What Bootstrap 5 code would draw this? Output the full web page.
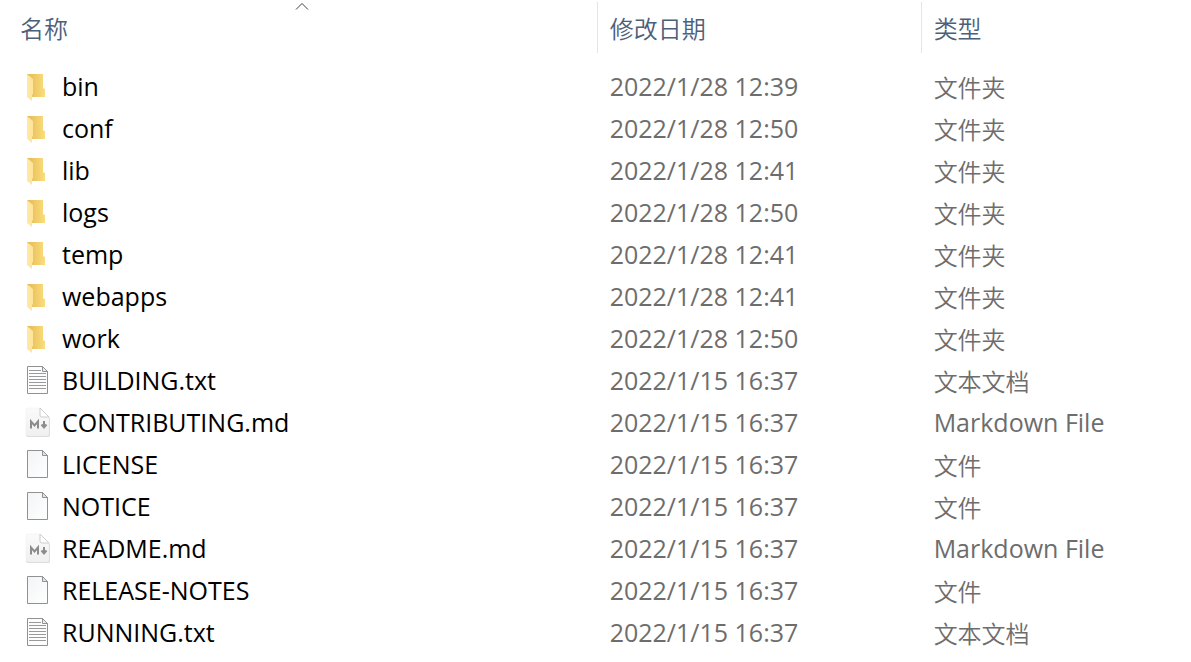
<!DOCTYPE html>
<html lang="zh-CN">
<head>
<meta charset="utf-8">
<meta name="viewport" content="width=device-width, initial-scale=1">
<title>文件列表</title>
<link href="https://cdn.jsdelivr.net/npm/bootstrap@5.3.0/dist/css/bootstrap.min.css" rel="stylesheet">
<style>
  body { font-family: "Open Sans", "Noto Sans CJK SC", sans-serif; background: #fff; color: #000; }
  .files { table-layout: fixed; font-size: 25px; line-height: 40px; }
  .files .col-name { width: 50.1%; }
  .files .col-date { width: 27.2%; }
  .files th, .files td { white-space: nowrap; overflow: hidden; }
  .files th { height: 66px; padding: 2px 0 0; vertical-align: top; font-weight: 400; }
  .files td { height: 42px; padding: 0 0 2px 13px; }
  .files td:first-child { padding-left: 25px; }
  .files td + td { color: #6d6d6d; }
  .files td.zh { padding-top: 2px; padding-bottom: 0; font-size: 24px; font-weight: 350; }
  .head-btn { display: block; width: 100%; height: 51px; padding: 0 12px; border: 0; border-left: 1px solid #e5e5e5; background: none; color: #4c607a; font-size: 24px; font-weight: 350; line-height: 53px; text-align: left; }
  .files th:first-child .head-btn { border-left: 0; padding-left: 20px; }
  .sort-mark { top: 2px; left: 50%; margin-left: -3px; }
  .file-icon { width: 26px; height: 30px; flex: none; margin-right: 11px; }
</style>
</head>
<body>
<svg class="position-absolute" width="0" height="0" aria-hidden="true">
  <defs>
    <linearGradient id="backFill"><stop offset="0" stop-color="#e3b956"/><stop offset="1" stop-color="#fcdd7c"/></linearGradient>
    <linearGradient id="flapFill"><stop offset="0" stop-color="#ffe9a6"/><stop offset="1" stop-color="#ffe499"/></linearGradient>
    <linearGradient id="paperFill" x2="1" y2="1"><stop offset="0" stop-color="#f2f4f6"/><stop offset="1" stop-color="#fff"/></linearGradient>
    <linearGradient id="mdFill" x2="0" y2="1"><stop offset="0" stop-color="#fafafa"/><stop offset="1" stop-color="#f0f0f0"/></linearGradient>
    <symbol id="folder" viewBox="0 0 26 30">
      <path d="M2 3h16v14l2 1v8H7L2 21z" fill="url(#backFill)"/>
      <path d="M2 3l6 5v15l-1 1v6l-5-4z" fill="url(#flapFill)"/>
    </symbol>
    <symbol id="blank" viewBox="0 0 26 30">
      <path d="M2.500 1.500h15l5 5v22h-20z" fill="url(#paperFill)" stroke="#909192"/>
      <path d="M17.500 1.500v5h5z" fill="#e2e3e4" stroke="#909192"/>
    </symbol>
    <symbol id="text" viewBox="0 0 26 30">
      <path d="M2.500 1.500h15l5 5v22h-20z" fill="#fdfdfd" stroke="#909192"/>
      <path d="M17.500 1.500v5h5z" fill="#eee" stroke="#909192"/>
      <path d="M4 5.500h12M4 8.500h17M4 11.500h17M4 14.500h17M4 17.500h17M4 20.500h17M4 23.500h17" stroke="#999a9b"/>
    </symbol>
    <symbol id="markdown" viewBox="0 0 26 30">
      <path d="M4 2h12l9 9v17q0 2-2 2H4q-3 0-3-2V4q0-2 3-2z" fill="#d8d8d8"/>
      <path d="M4 1h11l9 9v17q0 2-2 2H4q-3 0-3-2V3q0-2 3-2z" fill="url(#mdFill)" stroke="#ececec" stroke-width=".500"/>
      <path d="M15 1v7q0 2 2 2h7z" fill="#fff" stroke="#ccc"/>
      <path d="M6 21.500v-7l3.500 4 3.500-4v7M19 14v6M16.500 17.500l2.500 3 2.500-3" fill="none" stroke="#8c8c8c" stroke-width="2"/>
    </symbol>
  </defs>
</svg>
<main>
  <table class="files w-100">
    <colgroup><col class="col-name"><col class="col-date"><col></colgroup>
    <thead>
      <tr>
        <th class="position-relative" scope="col" aria-sort="ascending"><button type="button" class="head-btn">名称</button>
          <svg class="sort-mark position-absolute pe-none" width="14" height="9" viewBox="0 0 14 9" aria-hidden="true"><path d="M1 7.500l6-6 6 6" fill="none" stroke="#404040"/></svg></th>
        <th scope="col"><button type="button" class="head-btn">修改日期</button></th>
        <th scope="col"><button type="button" class="head-btn">类型</button></th>
      </tr>
    </thead>
    <tbody id="rows"></tbody>
  </table>
</main>
<script src="https://cdn.jsdelivr.net/npm/bootstrap@5.3.0/dist/js/bootstrap.bundle.min.js"></script>
<script>
  const kinds = { folder: '文件夹', text: '文本文档', markdown: 'Markdown File', blank: '文件' };
  const files = [
    ['bin', '2022/1/28 12:39', 'folder'], ['conf', '2022/1/28 12:50', 'folder'],
    ['lib', '2022/1/28 12:41', 'folder'], ['logs', '2022/1/28 12:50', 'folder'],
    ['temp', '2022/1/28 12:41', 'folder'], ['webapps', '2022/1/28 12:41', 'folder'],
    ['work', '2022/1/28 12:50', 'folder'], ['BUILDING.txt', '2022/1/15 16:37', 'text'],
    ['CONTRIBUTING.md', '2022/1/15 16:37', 'markdown'], ['LICENSE', '2022/1/15 16:37', 'blank'],
    ['NOTICE', '2022/1/15 16:37', 'blank'], ['README.md', '2022/1/15 16:37', 'markdown'],
    ['RELEASE-NOTES', '2022/1/15 16:37', 'blank'], ['RUNNING.txt', '2022/1/15 16:37', 'text']
  ];
  document.getElementById('rows').innerHTML = files.map(([name, date, kind]) => `
    <tr>
      <td><div class="d-flex align-items-center"><svg class="file-icon" aria-hidden="true"><use href="#${kind}"/></svg><span>${name}</span></div></td>
      <td>${date}</td>
      <td class="${kind === 'markdown' ? '' : 'zh'}">${kinds[kind]}</td>
    </tr>`).join('');
</script>
</body>
</html>
